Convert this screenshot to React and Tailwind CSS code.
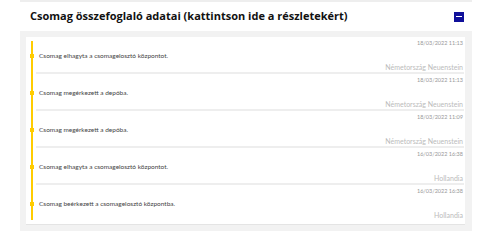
const events = [
  { date: '18/03/2022 11:13', text: 'Csomag elhagyta a csomagelosztó központot.', place: 'Németország Neuenstein' },
  { date: '18/03/2022 11:13', text: 'Csomag megérkezett a depóba.', place: 'Németország Neuenstein' },
  { date: '18/03/2022 11:09', text: 'Csomag megérkezett a depóba.', place: 'Németország Neuenstein' },
  { date: '16/03/2022 16:38', text: 'Csomag elhagyta a csomagelosztó központot.', place: 'Hollandia' },
  { date: '16/03/2022 16:38', text: 'Csomag beérkezett a csomagelosztó központba.', place: 'Hollandia' },
]

export default function App() {
  return (
    <div className="w-[480px] h-[240px] bg-white overflow-hidden" style={{ fontFamily: 'Lato, "Open Sans", sans-serif' }}>
      <div className="ml-[20px] mr-[8px] border-t-2 border-[#eeeeee]">
        <div className="h-[29px] flex items-center justify-between pl-[10px] pr-[8px]">
          <h2 className="text-[11px] font-bold text-[#111111]" style={{ fontFamily: '"Open Sans", sans-serif' }}>Csomag összefoglaló adatai (kattintson ide a részletekért)</h2>
          <button className="w-[10px] h-[10px] bg-[#10109a] flex items-center justify-center">
            <span className="block w-[6px] h-[1.5px] bg-white"></span>
          </button>
        </div>
        <div className="bg-[#f2f2f2] pt-[6px] pb-[6px] pl-[6px] pr-[7px]">
          <div className="relative bg-white border-b border-[#e4e4e4] pb-[4px]">
            <div className="absolute left-[5px] top-[4px] bottom-[4px] w-[2px] bg-[#ffcc00]"></div>
            <div className="ml-[10px] mr-[1px]">
              {events.map((e, i) => (
                <div key={i} className={'relative ' + (i < events.length - 1 ? 'border-b-2 border-[#eeeeee]' : '')}>
                  <div className="h-[12px] text-right pr-[1px] text-[5.5px] leading-[12px] text-[#999999]">{e.date}</div>
                  <div className="h-[13px] pl-[3px] text-[6.5px] leading-[13px] text-[#444444]">{e.text}</div>
                  <div className="h-[10px] text-right pr-[1px] text-[7px] leading-[10px] text-[#bbbbbb]">{e.place}</div>
                  <span className="absolute left-[-6px] top-[17px] w-[4px] h-[4px] bg-[#ffcc00]"></span>
                </div>
              ))}
            </div>
          </div>
        </div>
      </div>
    </div>
  )
}
